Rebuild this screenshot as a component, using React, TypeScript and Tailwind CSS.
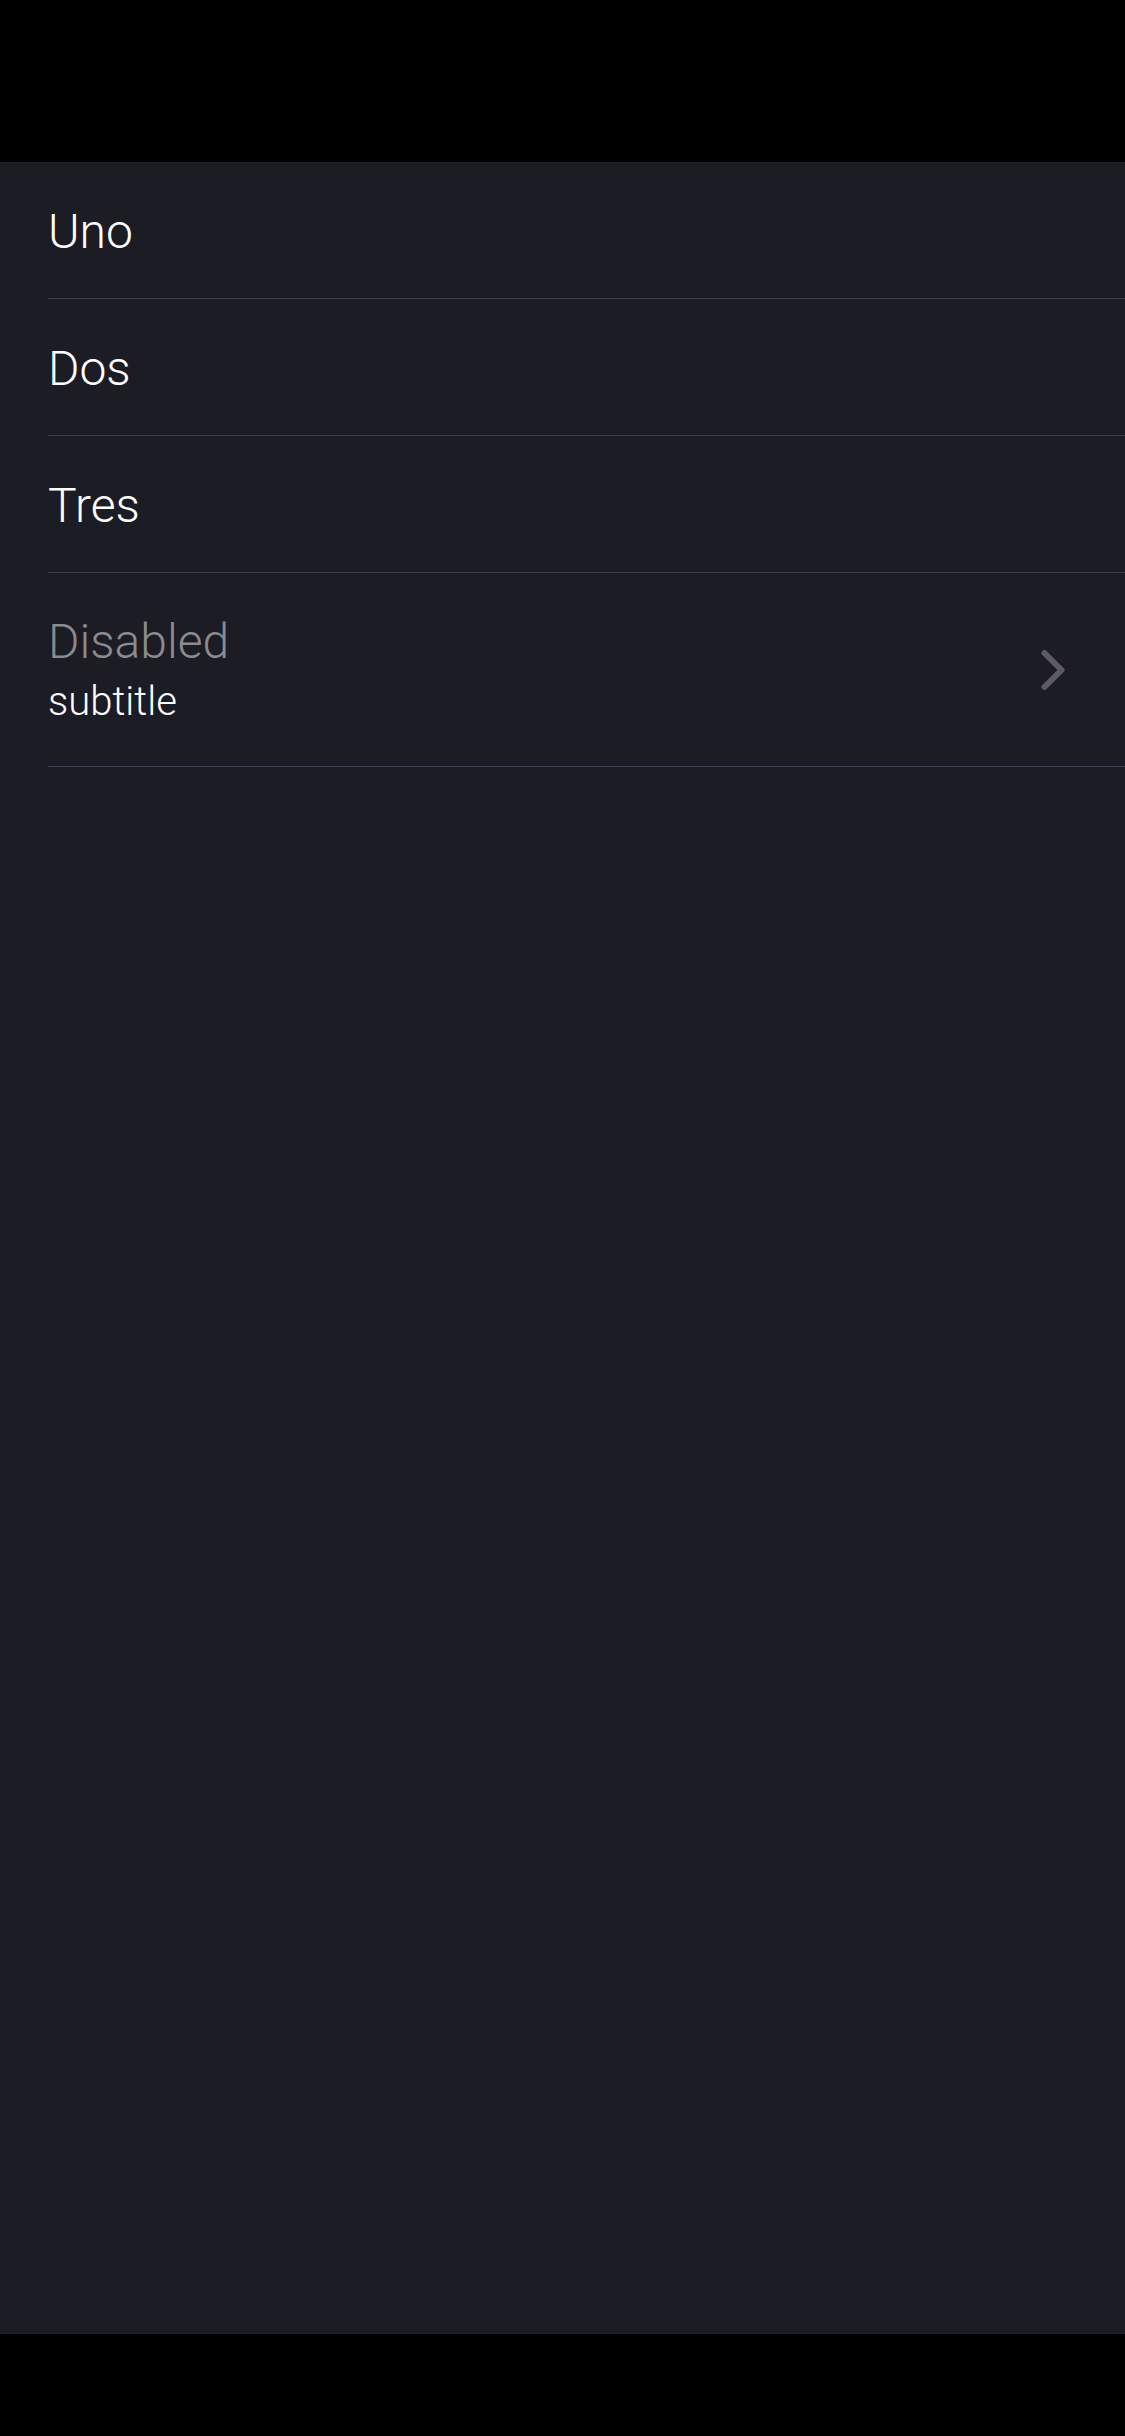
import { ChevronRight } from "lucide-react";

type Item = {
  title: string;
  subtitle?: string;
  disabled?: boolean;
  chevron?: boolean;
};

const items: Item[] = [
  { title: "Uno" },
  { title: "Dos" },
  { title: "Tres" },
  { title: "Disabled", subtitle: "subtitle", disabled: true, chevron: true },
];

function Row({ item }: { item: Item }) {
  return (
    <div className="pl-[48px]">
      <div className="flex items-center border-b border-[#3e3d50] pr-[38px]">
        {item.subtitle ? (
          <div className="flex-1 h-[193px] flex flex-col justify-center pt-[8px]">
            <span className="text-[48px] leading-[56px] font-light text-[#8b8b8e]">{item.title}</span>
            <span className="text-[40px] leading-[64px] font-light text-white">{item.subtitle}</span>
          </div>
        ) : (
          <div className="flex-1 h-[136px] flex items-center pt-[3px]">
            <span className="text-[48px] leading-[56px] font-light text-white">{item.title}</span>
          </div>
        )}
        {item.chevron && (
          <ChevronRight className="w-[68px] h-[68px] text-[#5b5a66]" strokeWidth={2.1} />
        )}
      </div>
    </div>
  );
}

export default function App() {
  return (
    <main
      className="w-[1125px] h-[2436px] flex flex-col bg-black antialiased"
      style={{ fontFamily: "Roboto, Inter, sans-serif" }}
    >
      <div className="h-[162px] bg-black" />
      <section className="flex-1 bg-[#1c1c24]">
        {items.map((item) => (
          <Row key={item.title} item={item} />
        ))}
      </section>
      <div className="h-[102px] bg-black" />
    </main>
  );
}
